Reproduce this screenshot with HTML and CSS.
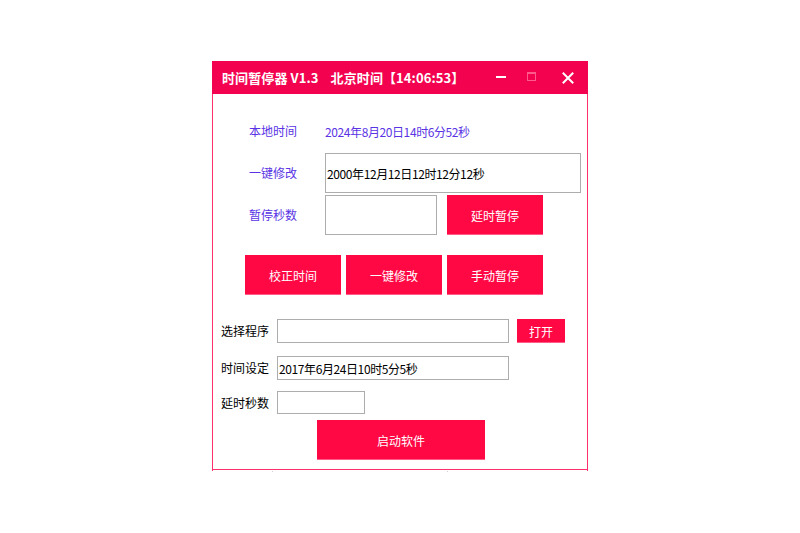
FILE: index.html
```html
<!DOCTYPE html>
<html lang="zh-CN">
<head>
<meta charset="utf-8">
<title>时间暂停器</title>
<link rel="stylesheet" href="styles.css">
</head>
<body>
<div class="win">
  <div class="titlebar">
    <span class="title">时间暂停器 V1.3<span class="gap"></span>北京时间【14:06:53】</span>
    <svg class="ctrls" width="78" height="33" viewBox="0 0 78 33">
      <rect x="0" y="15" width="10" height="2" fill="#ffffff"/>
      <rect x="31.5" y="11.5" width="8" height="8" fill="none" stroke="#ff5a8c" stroke-width="1"/>
      <rect x="31" y="11" width="9" height="2" fill="#ff5a8c"/>
      <path d="M67.5 12.5 L76.5 21.5 M76.5 12.5 L67.5 21.5" stroke="#ffffff" stroke-width="2" stroke-linecap="square"/>
    </svg>
  </div>
  <div class="content">
    <div class="sec1">
      <div class="row ra"><span class="lbl purple">本地时间</span><span class="val">2024年8月20日14时6分52秒</span></div>
      <div class="row rb"><span class="lbl purple">一键修改</span><div class="box wide">2000年12月12日12时12分12秒</div></div>
      <div class="row rc"><span class="lbl purple">暂停秒数</span><div class="box short"></div><button class="btn b96">延时暂停</button></div>
    </div>
    <div class="btnrow">
      <button class="btn b96">校正时间</button>
      <button class="btn b96">一键修改</button>
      <button class="btn b96">手动暂停</button>
    </div>
    <div class="sec2">
      <div class="row2 re"><span class="lbl2">选择程序</span><div class="box2 w232"></div><button class="btn open">打开</button></div>
      <div class="row2 rf"><span class="lbl2">时间设定</span><div class="box2 w232">2017年6月24日10时5分5秒</div></div>
      <div class="row2 rg"><span class="lbl2">延时秒数</span><div class="box2 w88 h23"></div></div>
      <div class="launch"><button class="btn big">启动软件</button></div>
    </div>
    <div class="sepline"></div>
    <div class="status"><span class="seg s1"></span><span class="seg s2"></span></div>
  </div>
</div>
</body>
</html>
```

FILE: styles.css
```css
* { box-sizing: border-box; }
html, body { margin: 0; padding: 0; background: #ffffff; }
body {
  width: 800px;
  height: 533px;
  overflow: hidden;
  padding: 61px 0 0 212px;
  font-family: "Noto Sans CJK SC", "Noto Sans", sans-serif;
  font-size: 12px;
  color: #000000;
}
.win { width: 376px; }
.titlebar {
  height: 33px;
  background: #f2024f;
  display: flex;
  align-items: center;
  padding-left: 10px;
}
.title {
  color: #ffffff;
  font-weight: bold;
  font-size: 13px;
  line-height: 16px;
  white-space: nowrap;
  letter-spacing: 0.1px;
}
.gap { display: inline-block; width: 12px; }
.ctrls { margin-left: auto; margin-right: 14px; display: block; }
.content {
  height: 377px;
  border-left: 1px solid #ff2f6c;
  border-right: 1px solid #ff2f6c;
  display: flex;
  flex-direction: column;
}
.sec1 { padding-left: 36px; padding-top: 27px; }
.row { display: flex; align-items: center; }
.ra { height: 20px; }
.rb { height: 40px; margin-top: 12px; }
.rc { height: 40px; margin-top: 2px; }
.lbl { width: 76px; font-size: 12px; line-height: 14px; }
.purple { color: #5a34e4; }
.val { color: #5a34e4; font-size: 12px; letter-spacing: -0.4px; }
.box {
  height: 40px;
  border: 1px solid #adadad;
  background: #ffffff;
  display: flex;
  align-items: center;
  padding-left: 1px;
  letter-spacing: -0.4px;
  white-space: nowrap;
}
.wide { width: 256px; }
.short { width: 112px; margin-right: 10px; }
.btn {
  border: none;
  margin: 0;
  padding: 0;
  background: #ff0844;
  color: #ffffff;
  font-family: "Noto Sans CJK SC", "Noto Sans", sans-serif;
  font-size: 12px;
  box-shadow: inset 0 -1px 0 #ff5c8a;
  display: flex;
  align-items: center;
  justify-content: center;
}
.b96 { width: 96px; height: 40px; }
.btnrow { display: flex; gap: 5px; padding-left: 32px; margin-top: 20px; }
.sec2 { padding-left: 8px; margin-top: 24px; }
.row2 { display: flex; align-items: center; }
.rf { margin-top: 13px; }
.rg { margin-top: 11px; }
.lbl2 { width: 56px; font-size: 12px; line-height: 14px; }
.box2 {
  height: 24px;
  border: 1px solid #adadad;
  background: #ffffff;
  display: flex;
  align-items: center;
  padding-left: 1px;
  letter-spacing: -0.4px;
  white-space: nowrap;
}
.w232 { width: 232px; }
.w88 { width: 88px; }
.h23 { height: 23px; }
.open { width: 48px; height: 24px; margin-left: 8px; }
.launch { padding-left: 96px; margin-top: 6px; }
.big { width: 168px; height: 40px; }
.sepline { height: 1px; background: #ff2f6c; margin-top: 9px; }
.status { height: 2px; position: relative; }
.seg { position: absolute; top: 1px; width: 1px; height: 1px; background: #cfcfcf; }
.s1 { left: 59px; }
.s2 { left: 234px; }
```
